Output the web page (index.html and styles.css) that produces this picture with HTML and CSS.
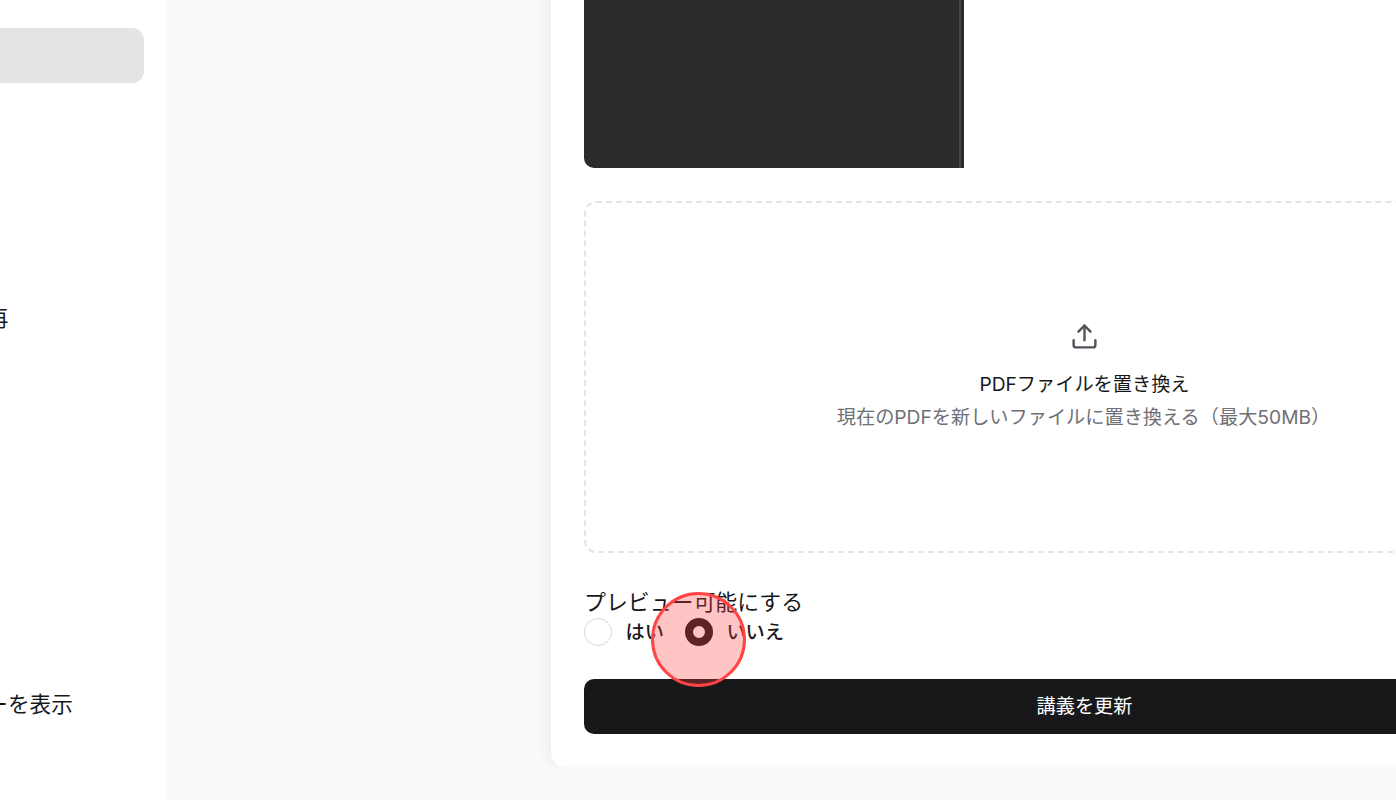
FILE: index.html
```html
<!DOCTYPE html>
<html lang="ja">
<head>
<meta charset="utf-8">
<title>講義を更新</title>
<link rel="stylesheet" href="styles.css">
</head>
<body>
<div class="app">
  <aside class="sidebar">
    <nav class="nav">
      <div class="nav-item nav-item-active"></div>
      <div class="nav-item nav-item-billing">売上の再</div>
      <div class="nav-item nav-item-users">ユーザーを表示</div>
    </nav>
  </aside>
  <main class="main">
    <div class="clip">
      <form class="card">
        <div class="preview"><div class="preview-page"></div></div>
        <div class="dropzone">
          <svg class="upload-icon" viewBox="0 0 24 24" fill="none" stroke="currentColor" stroke-width="2" stroke-linecap="round" stroke-linejoin="round">
            <path d="M21 15v4a2 2 0 0 1-2 2H5a2 2 0 0 1-2-2v-4"/>
            <polyline points="17 8 12 3 7 8"/>
            <line x1="12" y1="3" x2="12" y2="15"/>
          </svg>
          <div class="drop-title">PDFファイルを置き換え</div>
          <div class="drop-sub">現在のPDFを新しいファイルに置き換える（最大50MB）</div>
        </div>
        <div class="field">
          <div class="field-label">プレビュー可能にする</div>
          <div class="radios">
            <div class="radio-option"><span class="radio"></span><span class="radio-text">はい</span></div>
            <div class="radio-option"><span class="radio radio-on"></span><span class="radio-text">いいえ</span></div>
          </div>
        </div>
        <div class="submit"><span class="submit-text">講義を更新</span></div>
      </form>
    </div>
  </main>
</div>
<div class="click-marker"></div>
</body>
</html>
```
FILE: styles.css
```css
* { box-sizing: border-box; }
html, body { margin: 0; height: 800px; overflow: hidden; }
body {
  background: #fafafa;
  color: #18181b;
  font-family: Inter, "Noto Sans CJK JP", sans-serif;
}
.app { display: flex; height: 800px; }
.sidebar { width: 166px; flex-shrink: 0; background: #fff; overflow: hidden; }
.nav { display: flex; flex-direction: column; width: 344px; margin-left: -200px; padding-top: 28px; }
.nav-item { height: 55px; display: flex; align-items: center; padding-left: 122px; font-size: 21.6px; color: #18181b; white-space: nowrap; flex-shrink: 0; }
.nav-item-active { background: #e4e4e7; border-radius: 12px; }
.nav-item-billing { margin-top: 205.5px; }
.nav-item-users { margin-top: 331px; }
.main { flex: 1; min-width: 0; overflow: hidden; }
.clip { height: 767px; overflow: hidden; display: flex; flex-direction: column; justify-content: flex-end; padding-left: 384px; }
.card {
  width: 1068px;
  flex-shrink: 0;
  background: #fff;
  border-left: 1px solid #f0f0f1;
  border-radius: 14px;
  box-shadow: 0 1px 20px rgba(0, 0, 0, .07);
  padding: 0 33px 33px;
  display: flex;
  flex-direction: column;
}
.preview { width: 380px; height: 400px; background: #2a2b2d; border-radius: 0 0 0 10px; display: flex; justify-content: flex-end; padding-right: 3px; }
.preview-page { width: 2px; background: #47484a; }
.dropzone {
  margin-top: 33px;
  height: 352px;
  border: 2px dashed #e4e4e7;
  border-radius: 12px;
  display: flex;
  flex-direction: column;
  align-items: center;
  justify-content: center;
}
.upload-icon { width: 29px; height: 29px; color: #52525b; margin-bottom: 19px; }
.drop-title { font-size: 19.2px; font-weight: 400; line-height: 29px; }
.drop-sub { font-size: 19.2px; color: #6f6f76; line-height: 29px; margin-top: 4px; margin-right: 2px; }
.field { margin-top: 35px; }
.field-label { font-size: 21.9px; line-height: 28px; height: 30px; }
.radios { display: flex; gap: 21px; }
.radio-option { display: flex; align-items: center; gap: 13.5px; font-size: 19.2px; font-weight: 500; height: 28px; }
.radio-text { margin-top: -2px; }
.radio { width: 28px; height: 28px; border-radius: 50%; border: 1px solid #d9d9dd; background: #fff; flex-shrink: 0; }
.radio-on { border: 8px solid #18181b; }
.submit {
  margin-top: 33px;
  height: 55px;
  background: #18181b;
  color: #fff;
  border-radius: 10px;
  font-size: 19.2px;
  font-weight: 400;
  display: flex;
  align-items: center;
  justify-content: center;
}
.submit-text { margin-top: -3px; }
.click-marker {
  position: absolute;
  left: 651px;
  top: 592px;
  width: 95px;
  height: 95px;
  border-radius: 50%;
  border: 3px solid #f44;
  background: rgba(255, 60, 60, .3);
}
```
